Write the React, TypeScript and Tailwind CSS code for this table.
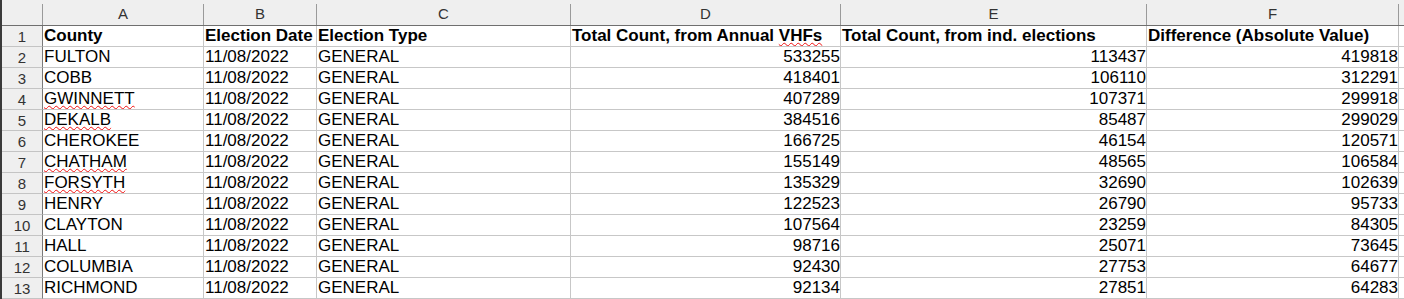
const cols = [
  { key: "A", w: "w-[161px]" },
  { key: "B", w: "w-[113px]" },
  { key: "C", w: "w-[254px]" },
  { key: "D", w: "w-[270px]" },
  { key: "E", w: "w-[306px]" },
  { key: "F", w: "w-[252px]" },
];

// county, ann. vhf total, ind. elections total, abs diff, spellcheck flag
const rows: [string, number, number, number, boolean][] = [
  ["FULTON", 533255, 113437, 419818, false],
  ["COBB", 418401, 106110, 312291, false],
  ["GWINNETT", 407289, 107371, 299918, true],
  ["DEKALB", 384516, 85487, 299029, true],
  ["CHEROKEE", 166725, 46154, 120571, false],
  ["CHATHAM", 155149, 48565, 106584, true],
  ["FORSYTH", 135329, 32690, 102639, true],
  ["HENRY", 122523, 26790, 95733, false],
  ["CLAYTON", 107564, 23259, 84305, false],
  ["HALL", 98716, 25071, 73645, false],
  ["COLUMBIA", 92430, 27753, 64677, false],
  ["RICHMOND", 92134, 27851, 64283, false],
];

const spell = "underline decoration-wavy decoration-[#f01010] decoration-1 underline-offset-[1px]";

const Cell = ({ w, right, bold, children }: { w: string; right?: boolean; bold?: boolean; children?: React.ReactNode }) => (
  <div
    className={`${w} shrink-0 h-[21px] leading-[20px] border-r border-b border-[#c7c7c7] whitespace-nowrap overflow-hidden text-[17px] text-black ${
      right ? "text-right pr-0" : "text-left pl-px"
    } ${bold ? "font-bold" : ""}`}
  >
    {children}
  </div>
);

const RowHead = ({ n }: { n: number }) => (
  <div className="w-[41px] shrink-0 h-[21px] leading-[21px] bg-[#efefef] border-r border-r-[#7a7a7a] border-b border-b-[#c4c4c4] text-center text-[15px] text-[#333]">
    {n}
  </div>
);

export default function App() {
  return (
    <div className="w-[1404px] h-[299px] overflow-hidden bg-white flex font-['Liberation_Sans',Arial,sans-serif]">
      <div className="w-[2px] shrink-0 bg-[#3a3a3a]" />
      <div className="flex flex-col flex-1">
        {/* column letters */}
        <div className="flex h-[26px] bg-[#efefef] border-b border-[#6f6f6f]">
          <div className="w-[41px] shrink-0 mt-[4px] border-r border-[#9a9a9a]" />
          {cols.map((c) => (
            <div
              key={c.key}
              className={`${c.w} shrink-0 mt-[4px] border-r border-[#9a9a9a] text-center text-[15px] leading-[20px] text-[#333]`}
            >
              {c.key}
            </div>
          ))}
          <div className="flex-1" />
        </div>

        <div className="flex">
          <RowHead n={1} />
          <Cell w={cols[0].w} bold>County</Cell>
          <Cell w={cols[1].w} bold>Election Date</Cell>
          <Cell w={cols[2].w} bold>Election Type</Cell>
          <Cell w={cols[3].w} bold>
            Total Count, from Annual <span className={spell}>VHFs</span>
          </Cell>
          <Cell w={cols[4].w} bold>Total Count, from ind. elections</Cell>
          <Cell w={cols[5].w} bold>Difference (Absolute Value)</Cell>
          <div className="flex-1 h-[21px] border-b border-[#c7c7c7]" />
        </div>

        {rows.map(([county, vhf, ind, diff, typo], i) => (
          <div key={county} className="flex">
            <RowHead n={i + 2} />
            <Cell w={cols[0].w}>{typo ? <span className={spell}>{county}</span> : county}</Cell>
            <Cell w={cols[1].w}>11/08/2022</Cell>
            <Cell w={cols[2].w}>GENERAL</Cell>
            <Cell w={cols[3].w} right>{vhf}</Cell>
            <Cell w={cols[4].w} right>{ind}</Cell>
            <Cell w={cols[5].w} right>{diff}</Cell>
            <div className="flex-1 h-[21px] border-b border-[#c7c7c7]" />
          </div>
        ))}
      </div>
    </div>
  );
}
